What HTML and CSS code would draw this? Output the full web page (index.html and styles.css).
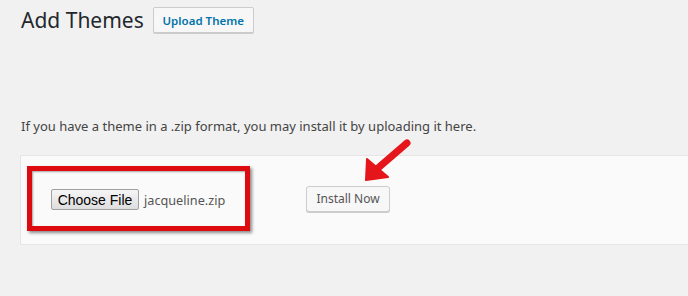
FILE: index.html
```html
<!DOCTYPE html>
<html lang="en">
  <head>
    <meta charset="UTF-8" />
    <meta name="viewport" content="width=device-width, initial-scale=1.0" />
    <title>Add Themes</title>
    <link rel="stylesheet" href="styles.css">
  </head>
  <body>
    <div class="wrap">
      <div class="page-title">
        <h1>Add Themes</h1>
        <button class="upload-btn">Upload Theme</button>
      </div>

      <p class="help">If you have a theme in a .zip format, you may install it by uploading it here.</p>

      <!-- Upload form -->
      <div class="upload-panel">
        <div class="highlight">
          <button class="choose-file">Choose File</button>
          <span class="file-name">jacqueline.zip</span>
        </div>
        <button class="install-btn">Install Now</button>
      </div>
    </div>

    <!-- Annotation arrow -->
    <svg class="arrow" width="80" height="60" viewBox="0 0 80 60">
      <g fill="#e5161b" stroke="#e5161b" stroke-linecap="round" stroke-linejoin="round">
        <line x1="57" y1="13" x2="28" y2="38" stroke-width="7" />
        <polygon points="16,50 17,29 38,47" stroke-width="2" />
      </g>
    </svg>
  </body>
</html>
```

FILE: styles.css
```css
/* General Styles */
body {
  font-family: "Noto Sans", "Open Sans", sans-serif;
  margin: 0;
  padding: 0;
  background-color: #f1f1f1;
  color: #444;
  overflow: hidden;
}

.wrap {
  padding: 7px 0 0 20px;
}

/* Title Row */
.page-title {
  display: flex;
  align-items: center;
  gap: 9px;
}

h1 {
  margin: 0;
  font-size: 21px;
  font-weight: 400;
  color: #23282d;
  line-height: 26px;
  padding-left: 1px;
}

.upload-btn {
  font-family: inherit;
  font-size: 11.5px;
  font-weight: 600;
  color: #0073aa;
  background-color: #f7f7f7;
  border: 1px solid #ccc;
  border-radius: 2px;
  height: 26px;
  width: 101px;
  padding: 0;
  box-shadow: 0 1px 0 #ccc;
}

/* Help Text */
.help {
  margin: 83px 0 0 1px;
  font-size: 13px;
  line-height: 20px;
}

/* Upload Panel */
.upload-panel {
  margin-top: 19px;
  margin-right: -10px;
  background-color: #fafafa;
  border: 1px solid #e5e5e5;
  padding: 10px 0 13px 6px;
  display: flex;
  align-items: center;
}

.highlight {
  width: 194px;
  height: 53px;
  border: 5px solid #dd0a10;
  box-shadow: 2px 2px 3px rgba(0, 0, 0, 0.45), inset 1px 1px 2px rgba(0, 0, 0, 0.35);
  display: flex;
  align-items: center;
  padding-left: 19px;
  padding-top: 2px;
  box-sizing: content-box;
}

.choose-file {
  font-family: "Liberation Sans", Arial, sans-serif;
  font-size: 14px;
  color: #000;
  height: 21px;
  width: 88px;
  padding: 0;
  border: 1px solid #a0a0a0;
  border-radius: 2px;
  background: linear-gradient(#f5f5f5, #dedede);
}

.file-name {
  margin-left: 5px;
  font-size: 12.7px;
  color: #555;
}

.install-btn {
  margin-left: 56px;
  font-family: inherit;
  font-size: 12px;
  color: #555;
  background-color: #f7f7f7;
  border: 1px solid #ccc;
  border-radius: 3px;
  height: 26px;
  width: 84px;
  padding: 0;
  box-shadow: 0 1px 0 #ccc;
}

/* Arrow overlay */
.arrow {
  position: absolute;
  left: 350px;
  top: 130px;
}
```
